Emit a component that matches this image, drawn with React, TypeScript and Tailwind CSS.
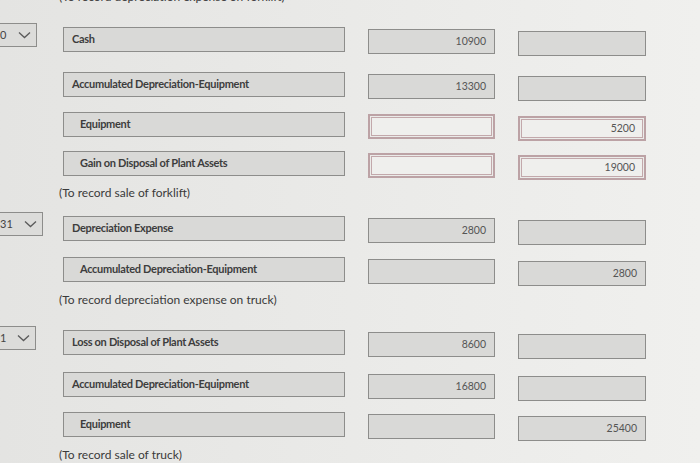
interface EntryRow {
  date?: string;
  dateWidth?: string;
  account: string;
  indent?: boolean;
  debit?: string;
  credit?: string;
  error?: boolean;
  spacing: string;
}

interface NoteRow {
  note: string;
  spacing: string;
}

type Line = EntryRow | NoteRow;

const lines: Line[] = [
  { note: "(To record depreciation expense on forklift)", spacing: "-mt-[11px]" },
  { date: "0", dateWidth: "w-[37px]", account: "Cash", debit: "10900", spacing: "mt-[22px]" },
  { account: "Accumulated Depreciation-Equipment", debit: "13300", spacing: "mt-[20px]" },
  { account: "Equipment", indent: true, credit: "5200", error: true, spacing: "mt-[15px]" },
  { account: "Gain on Disposal of Plant Assets", indent: true, credit: "19000", error: true, spacing: "mt-[14px]" },
  { note: "(To record sale of forklift)", spacing: "mt-[9px]" },
  { date: "31", dateWidth: "w-[43px]", account: "Depreciation Expense", debit: "2800", spacing: "mt-[15px]" },
  { account: "Accumulated Depreciation-Equipment", indent: true, credit: "2800", spacing: "mt-[16px]" },
  { note: "(To record depreciation expense on truck)", spacing: "mt-[10px]" },
  { date: "1", dateWidth: "w-[36px]", account: "Loss on Disposal of Plant Assets", debit: "8600", spacing: "mt-[22px]" },
  { account: "Accumulated Depreciation-Equipment", debit: "16800", spacing: "mt-[17px]" },
  { account: "Equipment", indent: true, credit: "25400", spacing: "mt-[15px]" },
  { note: "(To record sale of truck)", spacing: "mt-[10px]" },
];

function Chevron() {
  return (
    <svg width="13" height="8" viewBox="0 0 13 8" className="ml-auto" fill="none">
      <polyline points="1,1.5 6.5,6.5 12,1.5" stroke="#5a5a5a" strokeWidth="1.3" />
    </svg>
  );
}

function AmountBox({ value, error, width, offset }: { value?: string; error?: boolean; width: string; offset: string }) {
  if (error) {
    return (
      <div className={`ml-[23px] ${offset} ${width} h-[25px] shrink-0 border-2 border-[#bca2a5] bg-[#ebebe9] p-px`}>
        <div className="flex h-full items-center justify-end border border-[#c2a8ab] bg-[#efefed] pr-[7px] text-[10.5px] text-[#555]">
          {value}
        </div>
      </div>
    );
  }
  return (
    <div
      className={`ml-[23px] ${offset} ${width} flex h-[25px] shrink-0 items-center justify-end border border-[#8d8d8b] bg-[#d9d9d7] pr-[8px] text-[10.5px] text-[#555]`}
    >
      {value}
    </div>
  );
}

function Entry({ row }: { row: EntryRow }) {
  return (
    <div className={`flex h-[25px] items-start ${row.spacing}`}>
      <div className="w-[63px] shrink-0">
        {row.date && (
          <div
            className={`-mt-[4px] flex h-[24px] items-center border border-l-0 border-[#8d8d8b] bg-[#dcdcda] pr-[5px] text-[11px] text-[#444] ${row.dateWidth}`}
          >
            <span>{row.date}</span>
            <Chevron />
          </div>
        )}
      </div>
      <div
        className={`flex h-[25px] w-[282px] shrink-0 items-center border border-[#8d8d8b] bg-[#d9d9d7] text-[11px] font-bold tracking-[-0.3px] text-[#3d3d3d] ${
          row.indent ? "pl-[16px]" : "pl-[8px]"
        }`}
      >
        {row.account}
      </div>
      <AmountBox value={row.debit} error={row.error} width="w-[127px]" offset="mt-[2px]" />
      <AmountBox value={row.credit} error={row.error} width="w-[128px]" offset="mt-[4px]" />
    </div>
  );
}

export default function App() {
  return (
    <div className="h-[463px] w-[700px] overflow-hidden bg-gradient-to-r from-[#e4e4e2] via-[#eaeae8] to-[#f0f0ee] font-['Lato',sans-serif]">
      <div className="flex flex-col">
        {lines.map((line, i) =>
          "note" in line ? (
            <div key={i} className={`h-[16px] pl-[59px] text-[12px] leading-[16px] text-[#3a3a3a] ${line.spacing}`}>
              {line.note}
            </div>
          ) : (
            <Entry key={i} row={line} />
          )
        )}
      </div>
    </div>
  );
}
